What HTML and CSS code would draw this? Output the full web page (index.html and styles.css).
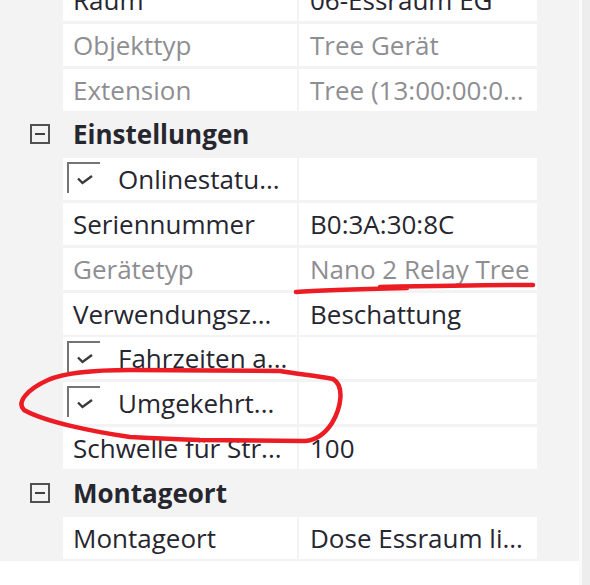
FILE: index.html
```html
<!DOCTYPE html>
<html lang="de">
<head>
<meta charset="utf-8">
<title>Eigenschaften</title>
<link rel="stylesheet" href="styles.css">
</head>
<body>
<div class="page">
  <div class="grid">
    <div class="row first"><div class="name">Raum</div><div class="value">06-Essraum EG</div></div>
    <div class="row"><div class="name dis">Objekttyp</div><div class="value dis">Tree Gerät</div></div>
    <div class="row"><div class="name dis">Extension</div><div class="value dis">Tree (13:00:00:0...</div></div>
    <div class="cat"><span class="exp"><span class="minus"></span></span><span class="cat-label">Einstellungen</span></div>
    <div class="row"><div class="name chk"><span class="box"><svg viewBox="0 0 16 10" width="16" height="10"><path d="M1 3.5 L5.5 8 L15 1" fill="none" stroke="#3a3a3a" stroke-width="2.4"/></svg></span><span>Onlinestatu...</span></div><div class="value"></div></div>
    <div class="row"><div class="name">Seriennummer</div><div class="value">B0:3A:30:8C</div></div>
    <div class="row"><div class="name dis">Gerätetyp</div><div class="value dis">Nano 2 Relay Tree</div></div>
    <div class="row"><div class="name">Verwendungsz...</div><div class="value">Beschattung</div></div>
    <div class="row"><div class="name chk"><span class="box"><svg viewBox="0 0 16 10" width="16" height="10"><path d="M1 3.5 L5.5 8 L15 1" fill="none" stroke="#3a3a3a" stroke-width="2.4"/></svg></span><span>Fahrzeiten a...</span></div><div class="value"></div></div>
    <div class="row"><div class="name chk"><span class="box"><svg viewBox="0 0 16 10" width="16" height="10"><path d="M1 3.5 L5.5 8 L15 1" fill="none" stroke="#3a3a3a" stroke-width="2.4"/></svg></span><span>Umgekehrt...</span></div><div class="value"></div></div>
    <div class="row"><div class="name">Schwelle für Str...</div><div class="value">100</div></div>
    <div class="cat"><span class="exp"><span class="minus"></span></span><span class="cat-label">Montageort</span></div>
    <div class="row"><div class="name">Montageort</div><div class="value">Dose Essraum li...</div></div>
  </div>
  <div class="scroll"></div>
  <svg class="marks" width="590" height="585" viewBox="0 0 590 585">
    <path d="M296 292 C320 290 360 289 407 288 M380 287 C430 286 490 285 533 285" fill="none" stroke="#ec1c24" stroke-width="4.5" stroke-linecap="round"/>
    <path d="M130 437 C95 432 45 422 24 410 C16 402 28 389 48 380 C66 372 95 370 130 370 L280 371 C298 374 318 376 333 379 C345 386 341 408 332 423 C325 434 317 440 305 441 L200 440 C170 439 150 438 130 437 Z" fill="none" stroke="#ec1c24" stroke-width="4.5" stroke-linejoin="round"/>
  </svg>
</div>
</body>
</html>
```

FILE: styles.css
```css
* { box-sizing: border-box; }
html, body { margin: 0; padding: 0; background: #ffffff; }
body {
  font-family: "Open Sans", "Noto Sans", "DejaVu Sans", sans-serif;
  font-size: 26px;
  color: #262630;
  width: 590px;
  height: 585px;
  overflow: hidden;
}
.page {
  position: relative;
  display: flex;
  width: 590px;
  height: 585px;
  background: #ffffff;
}
.grid {
  width: 579px;
  align-self: flex-start;
  background: #f3f3f3;
  display: flex;
  flex-direction: column;
}
.row {
  display: grid;
  grid-template-columns: 234px 238px;
  column-gap: 2px;
  margin-left: 63px;
  height: 42px;
  margin-bottom: 2.8px;
}
.row.first { margin-top: -21px; }
.name, .value {
  background: #ffffff;
  line-height: 42px;
  white-space: nowrap;
  overflow: hidden;
}
.name { padding-left: 10px; }
.value { padding-left: 11px; }
.dis { color: #8e8e92; }
.name.chk {
  display: flex;
  align-items: flex-start;
  padding-left: 4px;
}
.box {
  width: 33px;
  height: 31px;
  margin-top: 4px;
  border-top: 2px solid #747474;
  border-left: 2px solid #747474;
  display: flex;
  justify-content: center;
  padding-top: 11px;
  padding-left: 1px;
  flex: none;
}
.box svg { display: block; }
.name.chk span:last-child { margin-left: 18px; }
.cat {
  display: flex;
  align-items: center;
  height: 42px;
  margin-bottom: 2.8px;
  padding-left: 30px;
}
.exp {
  width: 20px;
  height: 20px;
  border: 2px solid #505050;
  display: flex;
  align-items: center;
  justify-content: center;
  flex: none;
}
.minus {
  width: 10px;
  height: 2px;
  background: #404040;
}
.cat-label {
  margin-left: 23px;
  font-weight: 700;
  color: #26262e;
}
.scroll {
  width: 11px;
  height: 585px;
  border-left: 3px solid #fafafa;
  background: #ededed;
}
.marks {
  position: absolute;
  left: 0;
  top: 0;
  pointer-events: none;
}
```
